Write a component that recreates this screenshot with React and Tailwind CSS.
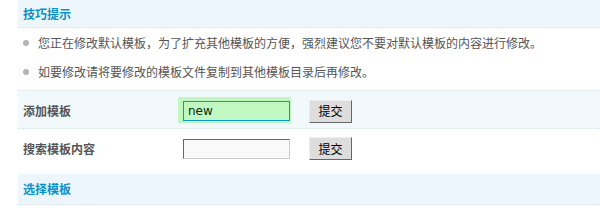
export default function App() {
  const tips = [
    "您正在修改默认模板，为了扩充其他模板的方便，强烈建议您不要对默认模板的内容进行修改。",
    "如要修改请将要修改的模板文件复制到其他模板目录后再修改。",
  ];

  return (
    <div className="w-[600px] h-[216px] bg-white pl-[18px] overflow-hidden font-['Noto_Sans_CJK_SC',sans-serif] text-[12px] leading-[14px]">
      {/* 技巧提示 */}
      <div className="h-[28px] bg-[#eef6fd] border-b border-dotted border-[#cfe5f6] pl-[5px] flex items-center font-bold text-[#0a90c8]">
        技巧提示
      </div>
      <ul className="text-[#555]">
        {tips.map((t, i) => (
          <li key={i} className="h-[29px] flex items-center">
            <span className="ml-[5px] mr-[9px] w-[6px] h-[6px] rounded-full bg-[#b4b4b4]"></span>
            {t}
          </li>
        ))}
      </ul>

      {/* 添加模板 */}
      <div className="mt-[4px] h-[39px] bg-[#f2f9fd] border-y border-dotted border-[#cfe5f6] flex items-center pt-[3px]">
        <span className="w-[165px] shrink-0 pl-[5px] font-bold text-[#555]">添加模板</span>
        <input
          defaultValue="new"
          className="w-[107px] h-[20px] px-[4px] border border-[#0a9ac8] bg-[#c1f8c1] text-[#0b2a0b] font-['DejaVu_Sans',sans-serif] text-[12px] outline-none shadow-[-2px_-1px_0_3px_#c1f8c1]"
        />
        <button className="ml-[19px] w-[43px] h-[23px] bg-[#ddd] border border-solid border-t-[#eee] border-l-[#eee] border-r-[#666] border-b-[#666] text-black">
          提交
        </button>
      </div>

      {/* 搜索模板内容 */}
      <div className="h-[45px] flex items-center pb-[6px]">
        <span className="w-[165px] shrink-0 pl-[5px] font-bold text-[#555]">搜索模板内容</span>
        <input className="w-[107px] h-[20px] px-[4px] border border-solid border-t-[#666] border-l-[#666] border-r-[#ccc] border-b-[#ccc] bg-[#f9f9f9] outline-none" />
        <button className="ml-[19px] w-[43px] h-[23px] bg-[#ddd] border border-solid border-t-[#eee] border-l-[#eee] border-r-[#666] border-b-[#666] text-black">
          提交
        </button>
      </div>

      {/* 选择模板 */}
      <div className="h-[31px] bg-[#eef6fd] border-b border-dotted border-[#cfe5f6] pl-[5px] flex items-center font-bold text-[#0a90c8]">
        选择模板
      </div>
    </div>
  );
}
